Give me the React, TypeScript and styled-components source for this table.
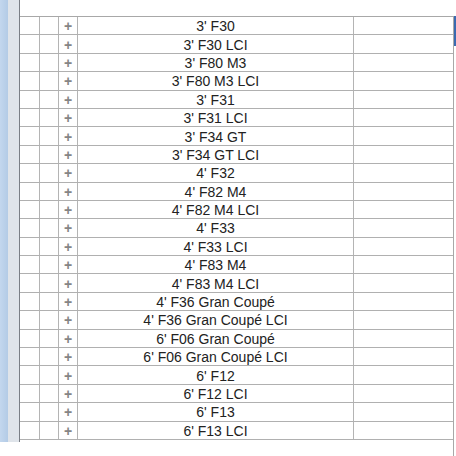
import React from "react";
import styled, { createGlobalStyle } from "styled-components";

const Global = createGlobalStyle`
  html, body { margin: 0; padding: 0; background: #ffffff; }
  body { font-family: "Liberation Sans", Arial, sans-serif; }
`;

const Page = styled.div`
  width: 456px;
  height: 456px;
  display: flex;
  flex-direction: row;
  background: #ffffff;
  overflow: hidden;
`;

const BlueStrip = styled.div`
  width: 9px;
  height: 442px;
  background: linear-gradient(to right, #c3d7ee, #b3cbe6);
`;

const GrayStrip = styled.div`
  width: 13px;
  height: 442px;
  background: #dfe4ea;
  border-right: 1px solid #7a7f86;
  box-sizing: border-box;
`;

const TableWrap = styled.div`
  padding-top: 16px;
  display: flex;
  flex-direction: row;
`;

const Table = styled.div`
  width: 433px;
  border-top: 1px solid #a8a8a8;
  border-right: 1px solid #a8a8a8;
  display: flex;
  flex-direction: column;
`;

const Row = styled.div`
  display: grid;
  grid-template-columns: 20px 19px 19px 276px 98px;
  height: 18.4px;
  box-sizing: border-box;
  border-bottom: 1px solid #b0b0b0;
`;

const Cell = styled.div<{ $last?: boolean }>`
  border-right: ${(p) => (p.$last ? "none" : "1px solid #b4b4b4")};
  display: flex;
  align-items: center;
  justify-content: center;
  font-size: 14px;
  color: #222222;
  white-space: nowrap;
  line-height: 1;
  padding-top: 1px;
  box-sizing: border-box;
`;

const Plus = styled.span`
  color: #858585;
  font-size: 14px;
  font-weight: bold;
`;

const Accent = styled.div`
  width: 2px;
  height: 30px;
  background: #3a6ab0;
`;

const items = [
  "3' F30",
  "3' F30 LCI",
  "3' F80 M3",
  "3' F80 M3 LCI",
  "3' F31",
  "3' F31 LCI",
  "3' F34 GT",
  "3' F34 GT LCI",
  "4' F32",
  "4' F82 M4",
  "4' F82 M4 LCI",
  "4' F33",
  "4' F33 LCI",
  "4' F83 M4",
  "4' F83 M4 LCI",
  "4' F36 Gran Coupé",
  "4' F36 Gran Coupé LCI",
  "6' F06 Gran Coupé",
  "6' F06 Gran Coupé LCI",
  "6' F12",
  "6' F12 LCI",
  "6' F13",
  "6' F13 LCI",
];

export default function App() {
  return (
    <>
      <Global />
      <Page>
        <BlueStrip />
        <GrayStrip />
        <TableWrap>
          <Table>
            {items.map((t) => (
              <Row key={t}>
                <Cell />
                <Cell />
                <Cell>
                  <Plus>+</Plus>
                </Cell>
                <Cell>{t}</Cell>
                <Cell $last />
              </Row>
            ))}
          </Table>
          <Accent />
        </TableWrap>
      </Page>
    </>
  );
}
